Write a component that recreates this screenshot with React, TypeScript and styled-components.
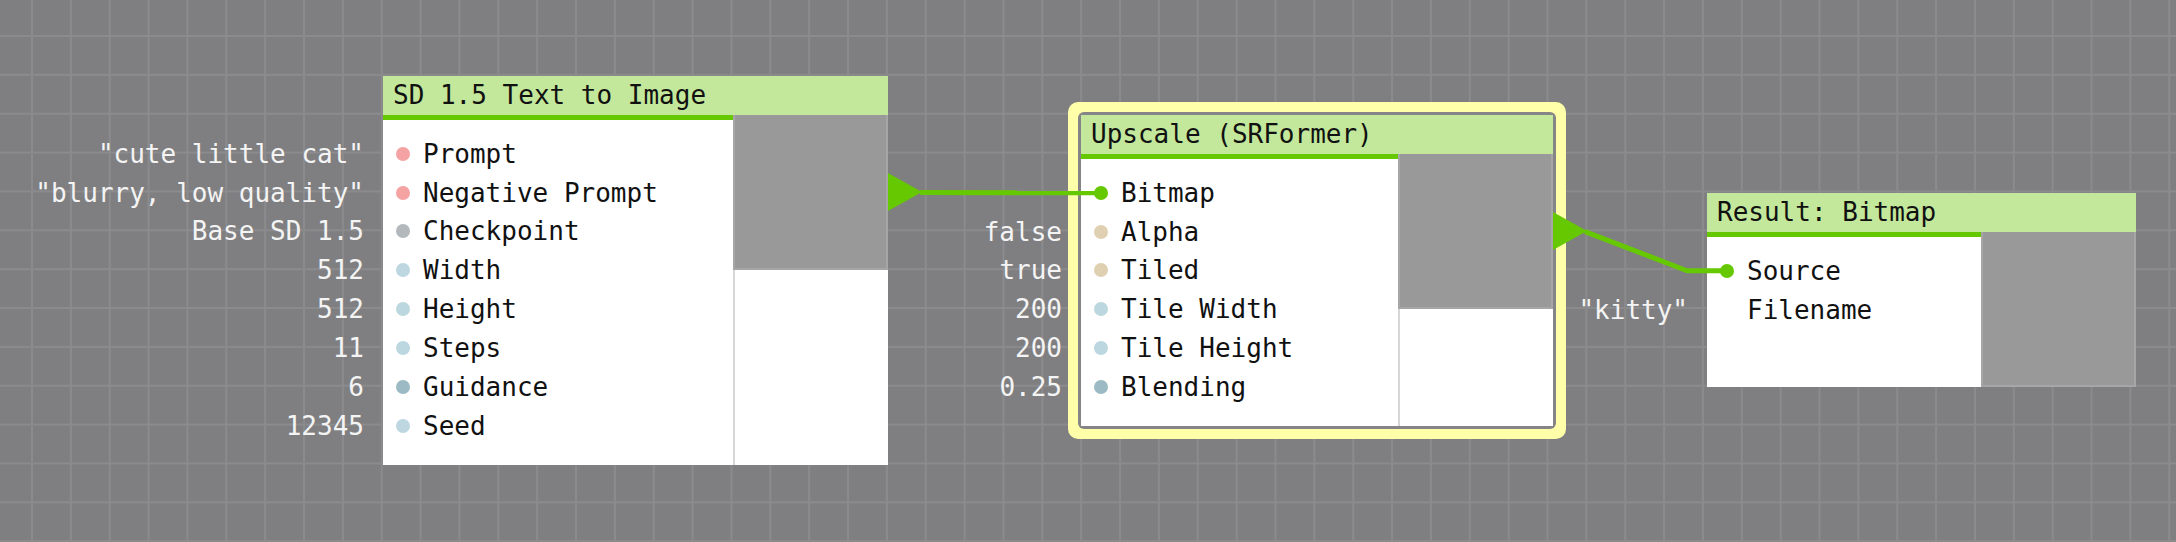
import styled, { createGlobalStyle, css } from "styled-components";

// one grid unit of the canvas
const U = 38.86;
const WIRE = "#66c800";

const GlobalStyle = createGlobalStyle`
  html, body {
    margin: 0;
    padding: 0;
    overflow: hidden;
  }
`;

const Canvas = styled.div`
  position: relative;
  width: 2176px;
  height: 542px;
  overflow: hidden;
  background-color: #7f7f81;
  background-image: linear-gradient(to right, #8b8b8d 2px, transparent 2px),
    linear-gradient(to bottom, #8b8b8d 2px, transparent 2px);
  background-size: ${U}px ${U}px;
  background-position: 31px 35px;
  font-family: "DejaVu Sans Mono", "Liberation Mono", monospace;
  font-size: 26px;
  color: #111;
`;

const NodeBox = styled.div<{ $x: number; $y: number; $w: number; $selected?: boolean }>`
  position: absolute;
  left: ${(p) => p.$x}px;
  top: ${(p) => p.$y}px;
  width: ${(p) => p.$w}px;
  z-index: 1;
  display: flex;
  flex-direction: column;
  ${(p) =>
    p.$selected &&
    css`
      border-radius: 3px;
      box-shadow: 0 0 0 3px #858587, 0 0 0 13px #ffffaa;
    `}
`;

const Header = styled.div`
  height: ${U}px;
  line-height: ${U}px;
  padding-left: 10px;
  background: #c3e89b;
  white-space: nowrap;
  overflow: hidden;
`;

const Body = styled.div`
  display: flex;
  flex-direction: row;
  background: #fff;
`;

const Ports = styled.div`
  flex: 1;
  display: flex;
  flex-direction: column;
  border-top: 5px solid ${WIRE};
  padding: ${U / 2 - 5}px 0 ${U / 2}px;
`;

const PortRow = styled.div`
  position: relative;
  height: ${U}px;
  display: flex;
  align-items: center;
  gap: 13px;
  padding-left: 13px;
  white-space: nowrap;
`;

const Dot = styled.span<{ $color: string }>`
  width: 14px;
  height: 14px;
  border-radius: 50%;
  flex: none;
  background: ${(p) => p.$color};
`;

const Value = styled.span`
  position: absolute;
  right: calc(100% + 19px);
  color: #f4f4f4;
  white-space: nowrap;
`;

const PreviewColumn = styled.div`
  width: 155px;
  flex: none;
  border-left: 2px solid #d6d6d6;
  box-sizing: border-box;
`;

const Preview = styled.div`
  height: ${4 * U}px;
  box-sizing: border-box;
  margin-left: -2px;
  background: #999;
  border: 2px solid #a6a6a6;
  border-top: none;
`;

const OutputArrow = styled.div`
  position: absolute;
  left: 100%;
  top: ${2.5 * U}px;
  width: 0;
  height: 0;
  border-top: ${U / 2}px solid transparent;
  border-bottom: ${U / 2}px solid transparent;
  border-left: 34px solid ${WIRE};
`;

const Wires = styled.svg`
  position: absolute;
  left: 0;
  top: 0;
  width: 2176px;
  height: 542px;
  z-index: 2;
  pointer-events: none;
`;

const PINK = "#f5a2a2";
const GREY = "#b3b8bc";
const INT = "#bcd7e0";
const FLOAT = "#9bbac4";
const BOOL = "#dfd0b2";

interface Input {
  name: string;
  color: string;
  value?: string;
}

interface NodeData {
  title: string;
  x: number;
  y: number;
  w: number;
  selected?: boolean;
  inputs: Input[];
}

const nodes: NodeData[] = [
  {
    title: "SD 1.5 Text to Image",
    x: 383,
    y: 76,
    w: 505,
    inputs: [
      { name: "Prompt", color: PINK, value: '"cute little cat"' },
      { name: "Negative Prompt", color: PINK, value: '"blurry, low quality"' },
      { name: "Checkpoint", color: GREY, value: "Base SD 1.5" },
      { name: "Width", color: INT, value: "512" },
      { name: "Height", color: INT, value: "512" },
      { name: "Steps", color: INT, value: "11" },
      { name: "Guidance", color: FLOAT, value: "6" },
      { name: "Seed", color: INT, value: "12345" },
    ],
  },
  {
    title: "Upscale (SRFormer)",
    x: 1081,
    y: 115,
    w: 472,
    selected: true,
    inputs: [
      { name: "Bitmap", color: WIRE },
      { name: "Alpha", color: BOOL, value: "false" },
      { name: "Tiled", color: BOOL, value: "true" },
      { name: "Tile Width", color: INT, value: "200" },
      { name: "Tile Height", color: INT, value: "200" },
      { name: "Blending", color: FLOAT, value: "0.25" },
    ],
  },
  {
    title: "Result: Bitmap",
    x: 1707,
    y: 193,
    w: 429,
    inputs: [
      { name: "Source", color: WIRE },
      { name: "Filename", color: "transparent", value: '"kitty"' },
    ],
  },
];

const Node = ({ node, output }: { node: NodeData; output?: boolean }) => (
  <NodeBox $x={node.x} $y={node.y} $w={node.w} $selected={node.selected}>
    <Header>{node.title}</Header>
    <Body>
      <Ports>
        {node.inputs.map((input) => (
          <PortRow key={input.name}>
            {input.value && <Value>{input.value}</Value>}
            <Dot $color={input.color} />
            {input.name}
          </PortRow>
        ))}
      </Ports>
      <PreviewColumn>
        <Preview />
      </PreviewColumn>
    </Body>
    {output && <OutputArrow />}
  </NodeBox>
);

export default function App() {
  const [sd, up, res] = nodes;
  // wire end points, taken from the node positions
  const out1 = { x: sd.x + sd.w + 34, y: sd.y + 3 * U };
  const in1 = { x: up.x + 20, y: up.y + 2 * U };
  const out2 = { x: up.x + up.w + 34, y: up.y + 3 * U };
  const in2 = { x: res.x + 20, y: res.y + 2 * U };

  return (
    <Canvas>
      <GlobalStyle />
      <Node node={sd} output />
      <Node node={up} output />
      <Node node={res} />
      <Wires viewBox="0 0 2176 542">
        <polyline
          points={`${out1.x - 2},${out1.y} ${in1.x},${in1.y}`}
          fill="none"
          stroke={WIRE}
          strokeWidth={5}
        />
        <polyline
          points={`${out2.x - 2},${out2.y} ${in2.x - 40},${in2.y} ${in2.x},${in2.y}`}
          fill="none"
          stroke={WIRE}
          strokeWidth={5}
          strokeLinejoin="round"
        />
      </Wires>
    </Canvas>
  );
}
